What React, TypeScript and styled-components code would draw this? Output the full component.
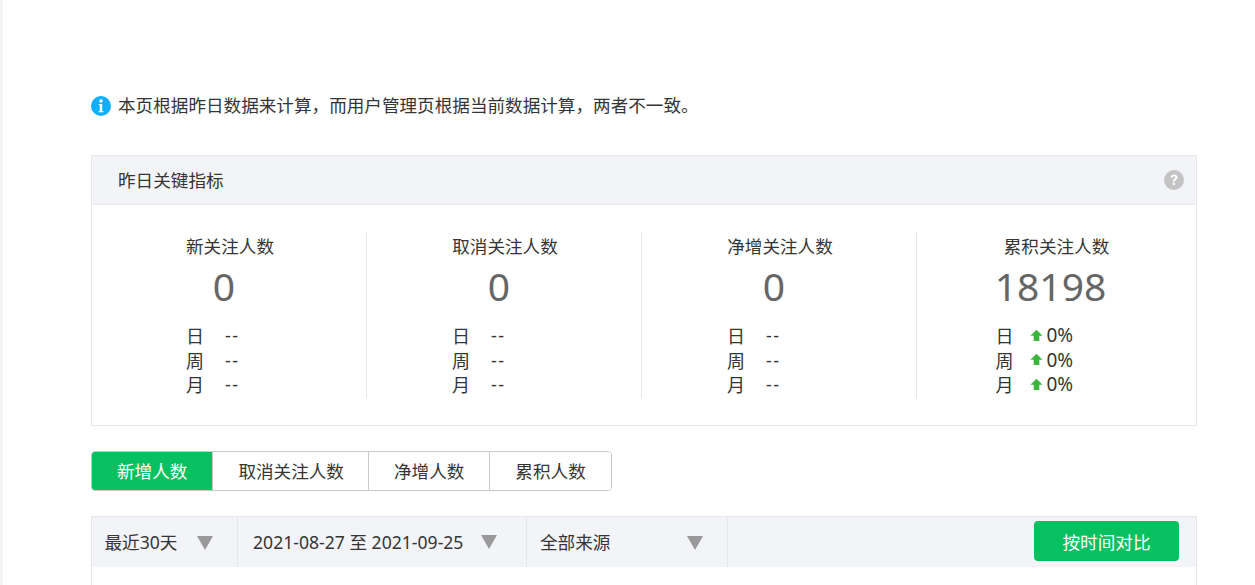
import styled, { createGlobalStyle } from 'styled-components';

const GlobalStyle = createGlobalStyle`
  html, body {
    margin: 0;
    height: 100%;
    overflow: hidden;
    background: #fff;
    color: #353535;
    font-family: "Noto Sans", "Noto Sans CJK SC", sans-serif;
  }
  * { box-sizing: border-box; }
`;

const METRICS = [
  { title: '新关注人数', value: '0', rowsWidth: 88, trend: false },
  { title: '取消关注人数', value: '0', rowsWidth: 106, trend: false },
  { title: '净增关注人数', value: '0', rowsWidth: 106, trend: false },
  { title: '累积关注人数', value: '18198', rowsWidth: 122, trend: true },
];

const PERIODS = ['日', '周', '月'];
const TABS = ['新增人数', '取消关注人数', '净增人数', '累积人数'];

const InfoIcon = () => (
  <svg width="20" height="20" viewBox="0 0 20 20">
    <circle cx="10" cy="10" r="10" fill="#10aeff" />
    <circle cx="10" cy="5" r="1.7" fill="#fff" />
    <path d="M7.8 8h3.4v7h1.2v1.3H7.6V15h1.2V9.3h-1z" fill="#fff" />
  </svg>
);

const HelpIcon = () => (
  <svg width="20" height="20" viewBox="0 0 20 20">
    <circle cx="10" cy="10" r="10" fill="#c4c4c4" />
    <path
      d="M6.6 7.6C6.7 5.5 8.1 4.4 10.1 4.4c2 0 3.4 1.1 3.4 2.9 0 1.3-.7 2-1.6 2.6-.8.5-1.1.9-1.1 1.8H8.9c0-1.5.4-2.2 1.4-2.9.7-.5 1-.9 1-1.4 0-.7-.5-1.1-1.2-1.1-.8 0-1.3.5-1.4 1.3z"
      fill="#fff"
    />
    <rect x="8.8" y="12.8" width="2.1" height="2.1" fill="#fff" />
  </svg>
);

const UpArrow = () => (
  <svg width="13" height="13" viewBox="0 0 12 12">
    <path d="M6 .8 11.6 6.2H8.6V11H3.4V6.2H.4z" fill="#3cb53c" />
  </svg>
);

const App = () => {
  return (
    <Page>
      <GlobalStyle />
      <Main>
        <Notice>
          <InfoIcon />
          <NoticeText>本页根据昨日数据来计算，而用户管理页根据当前数据计算，两者不一致。</NoticeText>
        </Notice>

        <Panel>
          <PanelHead>
            <PanelTitle>昨日关键指标</PanelTitle>
            <HelpIcon />
          </PanelHead>
          <MetricGrid>
            {METRICS.map((m) => (
              <Metric key={m.title}>
                <MetricTitle>{m.title}</MetricTitle>
                <MetricValue>{m.value}</MetricValue>
                <Rows $width={m.rowsWidth}>
                  {PERIODS.map((p) => (
                    <Row key={p}>
                      <RowLabel>{p}</RowLabel>
                      {m.trend ? (
                        <Trend>
                          <UpArrow />
                          0%
                        </Trend>
                      ) : (
                        <Dashes>--</Dashes>
                      )}
                    </Row>
                  ))}
                </Rows>
              </Metric>
            ))}
          </MetricGrid>
        </Panel>

        <Tabs>
          {TABS.map((t, i) => (
            <Tab key={t} $active={i === 0}>
              <TabLabel>{t}</TabLabel>
            </Tab>
          ))}
        </Tabs>

        <ChartPanel>
          <FilterBar>
            <Filter $width={146} $left={12.5} $right={24}>
              <FilterLabel>最近30天</FilterLabel>
              <Caret />
            </Filter>
            <Filter $width={289} $left={15} $right={29}>
              <FilterLabel>2021-08-27 至 2021-09-25</FilterLabel>
              <Caret $raised />
            </Filter>
            <Filter $width={201} $left={13} $right={24}>
              <FilterLabel>全部来源</FilterLabel>
              <Caret />
            </Filter>
            <CompareButton>
              <TabLabel>按时间对比</TabLabel>
            </CompareButton>
          </FilterBar>
        </ChartPanel>
      </Main>
    </Page>
  );
};

export default App;

const Page = styled.div`
  height: 585px;
  overflow: hidden;
  padding-left: 3px;
  background: #fff;
  border-left: 3px solid #f3f4f8;
`;

const Main = styled.div`
  width: 1106px;
  margin-left: 85px;
  padding-top: 93px;
`;

const Notice = styled.div`
  display: flex;
  align-items: center;
  gap: 7px;
  height: 26px;
  font-size: 17.6px;
  line-height: 26px;
  margin-bottom: 36px;
`;

const NoticeText = styled.span`
  margin-top: -2px;
`;

const Panel = styled.section`
  border: 1px solid #e4e8eb;
  height: 271px;
`;

const PanelHead = styled.div`
  display: flex;
  align-items: center;
  justify-content: space-between;
  height: 49px;
  padding: 0 12px 0 26px;
  background: #f3f4f8;
  border-bottom: 1px solid #e4e8eb;
  font-size: 17.6px;
`;

const PanelTitle = styled.span`
  margin-top: -1px;
`;

const MetricGrid = styled.div`
  display: grid;
  grid-template-columns: 275px 275px 275px 1fr;
  padding-top: 27px;
`;

const Metric = styled.div`
  display: flex;
  flex-direction: column;
  align-items: center;
  height: 166px;
  padding-left: 2px;
  border-right: 1px solid #e4e8eb;

  &:last-child {
    padding-left: 0;
    border-right: 0;
  }
`;

const MetricTitle = styled.div`
  font-size: 17.6px;
  line-height: 28px;
`;

const MetricValue = styled.div`
  font-size: 39px;
  line-height: 52px;
  color: #666;
  padding-right: 12px;
`;

const Rows = styled.div<{ $width: number }>`
  width: ${(p) => p.$width}px;
  margin-top: 11px;
`;

const Row = styled.div`
  display: flex;
  align-items: center;
  height: 24.5px;
  font-size: 18px;
`;

const RowLabel = styled.span`
  width: 39px;
`;

const Dashes = styled.span`
  letter-spacing: 1.5px;
`;

const Trend = styled.span`
  display: flex;
  align-items: center;
  gap: 4px;
  margin-left: -5px;
  font-size: 19px;
`;

const Tabs = styled.div`
  display: inline-flex;
  height: 40px;
  margin-top: 25px;
  border: 1px solid #c9c9c9;
  border-radius: 4px;
  overflow: hidden;
  vertical-align: top;
`;

const Tab = styled.div<{ $active: boolean }>`
  display: flex;
  align-items: center;
  padding: 0 25px;
  font-size: 17.6px;
  color: ${(p) => (p.$active ? '#fff' : '#353535')};
  background: ${(p) => (p.$active ? '#07c160' : '#fff')};
  border-left: 1px solid #c9c9c9;

  &:first-child {
    padding: 0 25px 0 26px;
    border-left: 0;
    margin: -1px 0 -1px -1px;
  }

  &:nth-child(2) {
    padding-right: 24px;
  }
`;

const TabLabel = styled.span`
  margin-top: -2px;
`;

const ChartPanel = styled.section`
  height: 100px;
  margin-top: 25px;
  border: 1px solid #e4e8eb;
`;

const FilterBar = styled.div`
  display: flex;
  align-items: center;
  height: 50px;
  background: #f3f4f8;
`;

const Filter = styled.div<{ $width: number; $left: number; $right: number }>`
  display: flex;
  align-items: center;
  justify-content: space-between;
  width: ${(p) => p.$width}px;
  height: 100%;
  padding: 0 ${(p) => p.$right}px 0 ${(p) => p.$left}px;
  font-size: 17.6px;
  border-right: 1px solid #e4e8eb;
`;

const FilterLabel = styled.span`
  margin-top: -2px;
  white-space: nowrap;
`;

const Caret = styled.i<{ $raised?: boolean }>`
  display: block;
  flex: none;
  width: 0;
  height: 0;
  border-left: 8px solid transparent;
  border-right: 8px solid transparent;
  border-top: 14px solid #999;
  margin-top: ${(p) => (p.$raised ? '-1px' : '1px')};
`;

const CompareButton = styled.button`
  width: 145px;
  height: 40px;
  margin: -2px 17px 0 auto;
  border: 0;
  border-radius: 4px;
  background: #07c160;
  color: #fff;
  font-family: inherit;
  font-size: 17.6px;
`;
